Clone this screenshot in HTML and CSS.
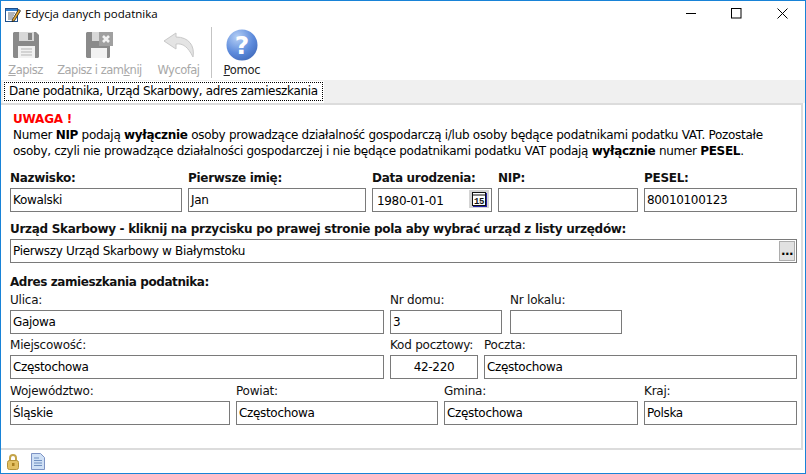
FILE: index.html
```html
<!DOCTYPE html>
<html lang="pl">
<head>
<meta charset="utf-8">
<title>Edycja danych podatnika</title>
<link rel="stylesheet" href="styles.css">
</head>
<body>
<div class="window">
  <header class="titlebar">
    <svg class="app-icon" width="16" height="16" viewBox="0 0 16 16"><rect x=".5" y="1.500" width="12" height="13" fill="#fff" stroke="#1d4f8c"/><rect x="1" y="2" width="11" height="2" fill="#2f7fd0"/><path d="M3 6h7M3 8h6M3 10h5M3 12h5" stroke="#5e6a78"/><path d="M7.500 12.500l6-10 2 1.200-6 10-2.500 1z" fill="#e8a92c" stroke="#1a1a1a" stroke-width=".8"/></svg>
    <span class="title">Edycja danych podatnika</span>
    <div class="winbtns">
      <svg width="11" height="11" viewBox="0 0 11 11"><path d="M0 5.500h10" stroke="#000"/></svg>
      <svg width="11" height="11" viewBox="0 0 11 11"><rect x=".5" y=".5" width="9.500" height="9.500" fill="none" stroke="#000"/></svg>
      <svg class="x-btn" width="11" height="11" viewBox="0 0 11 11"><path d="M.5.500l10 10M10.500.500l-10 10" stroke="#000"/></svg>
    </div>
  </header>
  <div class="toolbar">
    <div class="tool off t-save">
      <div class="ico"><svg width="26" height="26" viewBox="0 0 26 26"><path d="M1 0h22l3 3v22l-1 1H1l-1-1V1z" fill="#8a8a8a"/><rect x="6" y="0" width="15" height="9" fill="#d8d8d8"/><rect x="15" y="1" width="4" height="7" fill="#858585"/><rect x="5" y="14" width="17" height="12" fill="#f2f2f2"/><path d="M8 17h11M8 20h11M8 23h11" stroke="#b5b5b5"/></svg></div>
      <span><span class="u">Z</span>apisz</span>
    </div>
    <div class="tool off t-saveclose">
      <div class="ico"><svg width="27" height="26" viewBox="0 0 27 26"><path d="M1 0h21l2 2v23l-1 1H1l-1-1V1z" fill="#8a8a8a"/><rect x="6" y="0" width="11" height="9" fill="#d8d8d8"/><rect x="5" y="16" width="16" height="10" fill="#f2f2f2"/><rect x="13" y="0" width="14" height="14" fill="#a0a0a0"/><path d="M17 4l6 6M23 4l-6 6" stroke="#f2f2f2" stroke-width="2.600"/></svg></div>
      <span>Zapisz i zam<span class="u">k</span>nij</span>
    </div>
    <div class="tool off t-undo">
      <div class="ico"><svg width="32" height="26" viewBox="0 0 32 26"><path d="M13 1L1 9l12 8v-5c7-1 12 3 17 13 2-11-4-20-17-20z" fill="#e4e4e4" stroke="#c8c8c8"/></svg></div>
      <span>Wycofaj</span>
    </div>
    <div class="sep"></div>
    <div class="tool t-help">
      <div class="ico"><svg width="32" height="32" viewBox="0 0 32 32"><defs><radialGradient id="g" cx=".35" cy=".25" r=".85"><stop offset="0" stop-color="#b5cff5"/><stop offset=".6" stop-color="#5d8bdc"/><stop offset="1" stop-color="#3f68b8"/></radialGradient></defs><circle cx="16" cy="16" r="15.500" fill="url(#g)"/><text x="16" y="25" text-anchor="middle" class="qmark">?</text></svg></div>
      <span><span class="u">P</span>omoc</span>
    </div>
  </div>
  <div class="tabstrip"><div class="tab"><span class="tab-focus">Dane podatnika, Urząd Skarbowy, adres zamieszkania</span></div></div>
  <main class="panel">
    <p class="warn-head">UWAGA !</p>
    <p class="warn">Numer <b>NIP</b> podają <b>wyłącznie</b> osoby prowadzące działalność gospodarczą i/lub osoby będące podatnikami podatku VAT. Pozostałe osoby, czyli nie prowadzące działalności gospodarczej i nie będące podatnikami podatku VAT podają <b>wyłącznie</b> numer <b>PESEL</b>.</p>
    <div class="row r1">
      <div class="field w172"><label class="strong">Nazwisko:</label><div class="input">Kowalski</div></div>
      <div class="field w178"><label class="strong">Pierwsze imię:</label><div class="input">Jan</div></div>
      <div class="field w120"><label class="strong">Data urodzenia:</label><div class="input date">1980-01-01<span class="calbtn"><svg width="15" height="15" viewBox="0 0 15 15"><rect x="1" y="1" width="14" height="14" fill="#2222a8"/><rect x=".5" y=".5" width="13" height="13" fill="#fff" stroke="#111"/><path d="M1 3h12" stroke="#111"/><text x="7" y="12" text-anchor="middle" class="calnum">15</text></svg></span></div></div>
      <div class="field w140"><label class="strong">NIP:</label><div class="input"></div></div>
      <div class="field w153"><label class="strong">PESEL:</label><div class="input">80010100123</div></div>
    </div>
    <div class="row r2">
      <div class="field grow"><label class="strong">Urząd Skarbowy - kliknij na przycisku po prawej stronie pola aby wybrać urząd z listy urzędów:</label><div class="input pick">Pierwszy Urząd Skarbowy w Białymstoku<span class="dots">...</span></div></div>
    </div>
    <h2 class="section">Adres zamieszkania podatnika:</h2>
    <div class="row r3">
      <div class="field w374"><label>Ulica:</label><div class="input">Gajowa</div></div>
      <div class="field w112"><label>Nr domu:</label><div class="input">3</div></div>
      <div class="field w112 gap2"><label>Nr lokalu:</label><div class="input"></div></div>
    </div>
    <div class="row r4">
      <div class="field w374"><label>Miejscowość:</label><div class="input">Częstochowa</div></div>
      <div class="field w88"><label>Kod pocztowy:</label><div class="input center">42-220</div></div>
      <div class="field grow"><label>Poczta:</label><div class="input">Częstochowa</div></div>
    </div>
    <div class="row r5">
      <div class="field w220"><label>Województwo:</label><div class="input">Śląskie</div></div>
      <div class="field w202"><label>Powiat:</label><div class="input">Częstochowa</div></div>
      <div class="field w194"><label>Gmina:</label><div class="input">Częstochowa</div></div>
      <div class="field w153"><label>Kraj:</label><div class="input">Polska</div></div>
    </div>
  </main>
  <footer class="status">
    <svg width="12" height="16" viewBox="0 0 12 16"><path d="M3 7V4a3 3 0 0 1 6 0v3" fill="none" stroke="#c4a44a" stroke-width="2"/><rect x=".5" y="6.500" width="11" height="9" rx="2" fill="#e3c063" stroke="#b4923a"/><rect x="5" y="9" width="2.500" height="3" fill="#a97f20"/></svg>
    <svg width="14" height="17" viewBox="0 0 14 17"><path d="M.5.500h9l4 4v12H.5z" fill="#cfe0f5" stroke="#7d93c4"/><path d="M3 5h5M3 7.500h8M3 10h8M3 12.500h8" stroke="#6f8fc0"/></svg>
  </footer>
</div>
</body>
</html>
```
FILE: styles.css
```css
* { box-sizing: border-box; }
html, body { margin: 0; padding: 0; }
body { width: 806px; height: 474px; overflow: hidden; background: #fff; font: 12px/14px "DejaVu Sans", sans-serif; color: #000; }
.window { width: 806px; height: 474px; border: 1px solid #1883d7; display: flex; flex-direction: column; background: #fff; }
.titlebar { height: 28px; flex: none; display: flex; align-items: center; padding-left: 4px; }
.app-icon { margin-right: 4px; margin-top: -1px; }
.title { font: 11.5px/14px "Open Sans", sans-serif; margin-top: -2px; }
.winbtns { margin-left: auto; display: flex; gap: 34px; margin-right: 17px; margin-top: -4px; }
.x-btn { margin-left: 1px; }
.toolbar { height: 51px; flex: none; display: flex; align-items: flex-start; }
.tool { display: flex; flex-direction: column; align-items: center; height: 51px; flex: none; font: 11.5px/14px "DejaVu Sans", sans-serif; letter-spacing: -.5px; white-space: nowrap; }
.ico { height: 32px; margin-bottom: 2px; display: flex; align-items: center; justify-content: center; }
.ico svg { display: block; }
.off { color: #a8a8a8; }
.u { text-decoration: underline; }
.t-save { width: 49px; }
.t-saveclose { width: 99px; }
.t-undo { width: 59px; }
.t-help { width: 60px; color: #222; letter-spacing: -.25px; }
.sep { width: 1px; height: 51px; background: #c4c4c4; margin: -2px 0 0 3px; flex: none; }
.qmark { font: bold 25px "DejaVu Sans", sans-serif; fill: #fff; }
.tabstrip { height: 23px; flex: none; background: #f0f0f0; padding: 1px 0 0 2px; display: flex; align-items: flex-start; }
.tab { height: 22px; background: #fff; padding: 1px; }
.tab-focus { display: block; height: 19px; padding: 1px 5px 0; outline: 1px dotted #000; outline-offset: -1px; font: 12px/16px "DejaVu Sans", sans-serif; letter-spacing: -.34px; white-space: nowrap; }
.panel { flex: 1; min-height: 0; margin-right: 2px; border: 2px solid #dcdcdc; border-left: 0; padding: 0 4px 0 9px; }
.warn-head { margin: 6px 0 0 3px; font-weight: bold; color: #f00; line-height: 16px; font-size: 12px; letter-spacing: -.2px; }
.warn { margin: 0 0 0 3px; line-height: 16px; font-size: 12px; letter-spacing: -.29px; width: 775px; }
.warn b { letter-spacing: -.3px; }
.row { display: flex; gap: 6px; }
.r1 { margin-top: 11px; }
.r2 { margin-top: 9px; }
.section { margin: 12px 0 0; font-size: 12px; font-weight: bold; line-height: 14px; letter-spacing: -.42px; color: #111; }
.r3 { margin-top: 3px; }
.r4 { margin-top: 3px; }
.r5 { margin-top: 4px; }
.field { display: flex; flex-direction: column; flex: none; }
label { display: block; height: 18px; line-height: 17px; font-size: 12px; letter-spacing: -.22px; color: #111; white-space: nowrap; }
label.strong { font-weight: bold; letter-spacing: -.3px; }
.input { height: 24px; border: 1px solid #7a7a7a; background: #fff; line-height: 22px; padding: 0 2px; font-size: 12px; letter-spacing: -.33px; white-space: nowrap; position: relative; }
.center { text-align: center; }
.date { padding-left: 4px; line-height: 24px; }
.calbtn { position: absolute; right: 2px; top: 1px; width: 20px; height: 18px; background: #d4d4d4; display: flex; align-items: center; justify-content: center; }
.calnum { font: bold 9px "Liberation Mono", monospace; fill: #111; }
.pick { padding-right: 20px; }
.dots { position: absolute; right: 1px; top: 1px; width: 16px; height: 20px; background: #e1e1e1; border: 1px solid #adadad; text-align: center; line-height: 19px; font-weight: bold; letter-spacing: -.5px; }
.grow { flex: 1; min-width: 0; }
.w172 { width: 172px; } .w178 { width: 178px; } .w120 { width: 120px; } .w140 { width: 140px; } .w153 { width: 153px; }
.w374 { width: 374px; } .w112 { width: 112px; } .w88 { width: 88px; } .w220 { width: 220px; } .w202 { width: 202px; } .w194 { width: 194px; }
.gap2 { margin-left: 2px; }
.status { flex: none; height: 23px; display: flex; align-items: center; gap: 12px; padding-left: 6px; background: #fff; }
```
